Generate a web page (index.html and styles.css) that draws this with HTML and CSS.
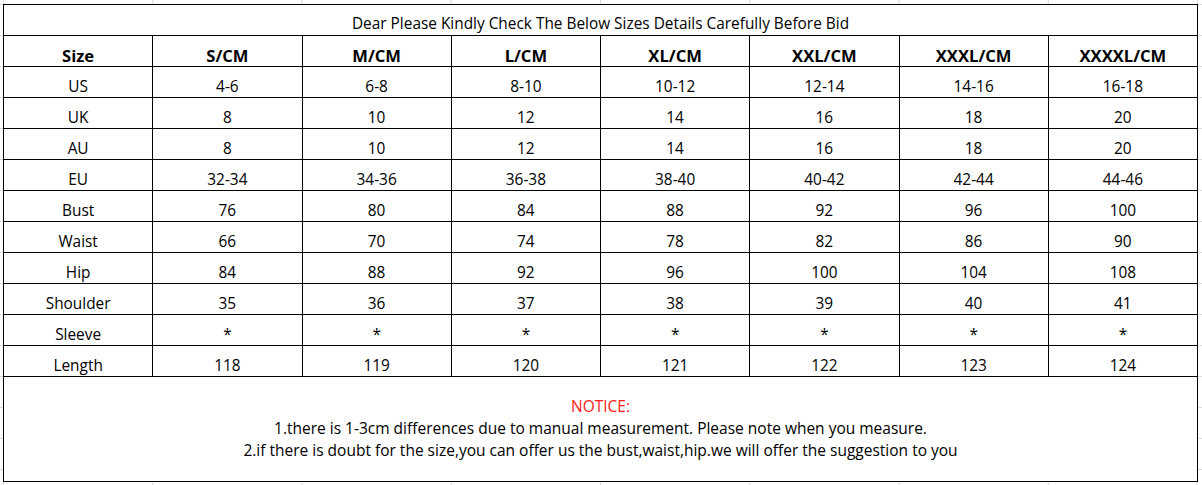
FILE: index.html
```html
<!DOCTYPE html>
<html lang="en">
<head>
<meta charset="utf-8">
<title>Size Chart</title>
<link rel="stylesheet" href="styles.css">
</head>
<body>
<div class="sheet">
  <div class="chart">
    <div class="cell title">Dear Please Kindly Check The Below Sizes Details Carefully Before Bid</div>

    <div class="cell head">Size</div><div class="cell head">S/CM</div><div class="cell head">M/CM</div><div class="cell head">L/CM</div><div class="cell head">XL/CM</div><div class="cell head">XXL/CM</div><div class="cell head">XXXL/CM</div><div class="cell head">XXXXL/CM</div>

    <div class="cell">US</div><div class="cell">4-6</div><div class="cell">6-8</div><div class="cell">8-10</div><div class="cell">10-12</div><div class="cell">12-14</div><div class="cell">14-16</div><div class="cell">16-18</div>

    <div class="cell">UK</div><div class="cell">8</div><div class="cell">10</div><div class="cell">12</div><div class="cell">14</div><div class="cell">16</div><div class="cell">18</div><div class="cell">20</div>

    <div class="cell">AU</div><div class="cell">8</div><div class="cell">10</div><div class="cell">12</div><div class="cell">14</div><div class="cell">16</div><div class="cell">18</div><div class="cell">20</div>

    <div class="cell">EU</div><div class="cell">32-34</div><div class="cell">34-36</div><div class="cell">36-38</div><div class="cell">38-40</div><div class="cell">40-42</div><div class="cell">42-44</div><div class="cell">44-46</div>

    <div class="cell">Bust</div><div class="cell">76</div><div class="cell">80</div><div class="cell">84</div><div class="cell">88</div><div class="cell">92</div><div class="cell">96</div><div class="cell">100</div>

    <div class="cell">Waist</div><div class="cell">66</div><div class="cell">70</div><div class="cell">74</div><div class="cell">78</div><div class="cell">82</div><div class="cell">86</div><div class="cell">90</div>

    <div class="cell">Hip</div><div class="cell">84</div><div class="cell">88</div><div class="cell">92</div><div class="cell">96</div><div class="cell">100</div><div class="cell">104</div><div class="cell">108</div>

    <div class="cell">Shoulder</div><div class="cell">35</div><div class="cell">36</div><div class="cell">37</div><div class="cell">38</div><div class="cell">39</div><div class="cell">40</div><div class="cell">41</div>

    <div class="cell">Sleeve</div><div class="cell">*</div><div class="cell">*</div><div class="cell">*</div><div class="cell">*</div><div class="cell">*</div><div class="cell">*</div><div class="cell">*</div>

    <div class="cell">Length</div><div class="cell">118</div><div class="cell">119</div><div class="cell">120</div><div class="cell">121</div><div class="cell">122</div><div class="cell">123</div><div class="cell">124</div>

    <div class="cell notice">
      <p class="notice-title">NOTICE:</p>
      <p>1.there is 1-3cm differences due to manual measurement. Please note when you measure.</p>
      <p>2.if there is doubt for the size,you can offer us the bust,waist,hip.we will offer the suggestion to you</p>
    </div>
  </div>
</div>
</body>
</html>
```

FILE: styles.css
```css
html, body {
  margin: 0;
  padding: 0;
  background: #ffffff;
}

body {
  width: 1202px;
  height: 485px;
  overflow: hidden;
  font-family: "Open Sans", "Noto Sans", "Liberation Sans", sans-serif;
  font-size: 15.4px;
  color: #000000;
  background-color: #ffffff;
  background-image:
    linear-gradient(to right, #d9d9d9 1px, transparent 1px),
    linear-gradient(to bottom, #d9d9d9 1px, transparent 1px);
  background-size: 149.25px 100%, 100% 31px;
  background-position: 3px 0, 0 4px;
}

.sheet {
  padding: 4px 0 0 3px;
}

.chart {
  width: 1195px;
  box-sizing: border-box;
  display: grid;
  grid-template-columns: repeat(8, 1fr);
  grid-template-rows: repeat(12, 30px) 104px;
  gap: 1px;
  padding: 1px;
  background: #000000;
}

.cell {
  background: #ffffff;
  display: flex;
  align-items: flex-end;
  justify-content: center;
  line-height: 20px;
  padding-bottom: 0;
  white-space: nowrap;
}

.title {
  grid-column: 1 / -1;
  padding-bottom: 1px;
}

.head {
  font-weight: 700;
  font-size: 16.6px;
  padding-bottom: 0;
}

.notice {
  grid-column: 1 / -1;
  flex-direction: column;
  justify-content: center;
  align-items: center;
  padding: 0;
  font-size: 15.5px;
  line-height: 21.7px;
}

.notice p {
  margin: 0;
}

.notice-title {
  color: #ff1a1a;
}
```
